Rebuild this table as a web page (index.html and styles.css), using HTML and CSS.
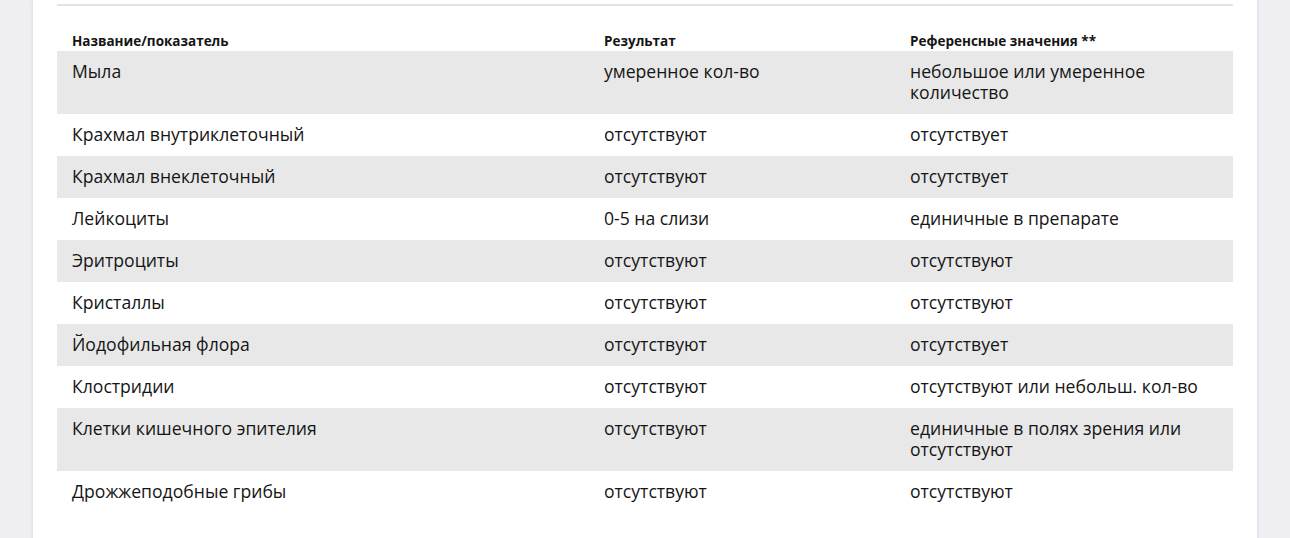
FILE: index.html
```html
<!DOCTYPE html>
<html lang="ru">
<head>
<meta charset="utf-8">
<link rel="stylesheet" href="styles.css">
</head>
<body>
<div class="page">
  <div class="rule"></div>
  <table class="results">
    <thead>
      <tr>
        <th class="c1">Название/показатель</th>
        <th class="c2">Результат</th>
        <th class="c3">Референсные значения **</th>
      </tr>
    </thead>
    <tbody>
      <tr><td>Мыла</td><td>умеренное кол-во</td><td>небольшое или умеренное количество</td></tr>
      <tr><td>Крахмал внутриклеточный</td><td>отсутствуют</td><td>отсутствует</td></tr>
      <tr><td>Крахмал внеклеточный</td><td>отсутствуют</td><td>отсутствует</td></tr>
      <tr><td>Лейкоциты</td><td>0-5 на слизи</td><td>единичные в препарате</td></tr>
      <tr><td>Эритроциты</td><td>отсутствуют</td><td>отсутствуют</td></tr>
      <tr><td>Кристаллы</td><td>отсутствуют</td><td>отсутствуют</td></tr>
      <tr><td>Йодофильная флора</td><td>отсутствуют</td><td>отсутствует</td></tr>
      <tr><td>Клостридии</td><td>отсутствуют</td><td>отсутствуют или небольш. кол-во</td></tr>
      <tr><td>Клетки кишечного эпителия</td><td>отсутствуют</td><td>единичные в полях зрения или отсутствуют</td></tr>
      <tr><td>Дрожжеподобные грибы</td><td>отсутствуют</td><td>отсутствуют</td></tr>
    </tbody>
  </table>
</div>
</body>
</html>
```

FILE: styles.css
```css
html, body {
  margin: 0;
  padding: 0;
}
body {
  background: #efeff4;
  font-family: "Open Sans", "Liberation Sans", sans-serif;
  color: #151515;
  overflow: hidden;
}
.page {
  width: 1224px;
  margin: 0 auto;
  background: #fff;
  box-shadow: 0 0 4px rgba(0, 0, 0, 0.12);
  padding: 4px 24px 40px;
  box-sizing: border-box;
  min-height: 538px;
}
.rule {
  height: 2px;
  background: #e4e4e4;
}
.results {
  width: 100%;
  border-collapse: collapse;
  margin-top: 26px;
  table-layout: fixed;
}
.results th {
  font-size: 13.5px;
  font-weight: 700;
  line-height: 18px;
  text-align: left;
  padding: 0 15px 1px;
}
.results th.c1 { width: 502px; }
.results th.c2 { width: 276px; }
.results td {
  font-size: 17.6px;
  line-height: 21px;
  padding: 10px 15px 11px;
  vertical-align: top;
}
.results tbody tr:nth-child(odd) {
  background: #e8e8e8;
}
```
